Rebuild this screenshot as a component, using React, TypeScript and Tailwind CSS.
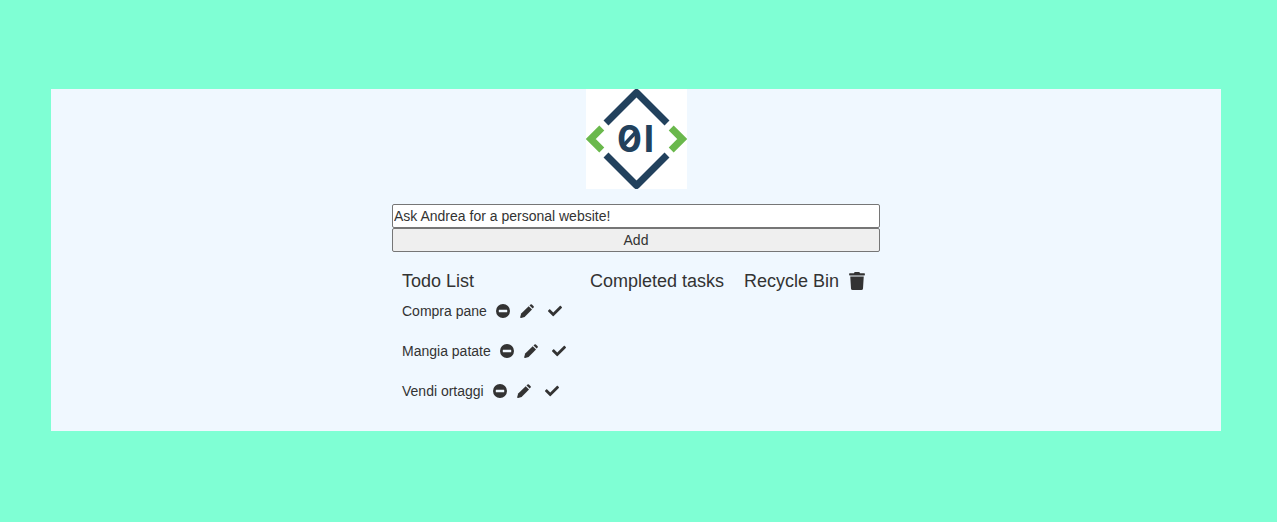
import { useState } from "react";
import { FaCheck, FaTrash } from "react-icons/fa";

const initialTasks = ["Compra pane", "Mangia patate", "Vendi ortaggi"];

function Logo() {
  return (
    <svg width="101" height="100" viewBox="0 0 101 100" role="img" aria-label="Logo" className="block bg-white">
      <g fill="none" stroke="#22415d" strokeWidth="7" strokeLinejoin="round">
        <path d="M20 34 L50.5 3.5 L81 34" />
        <path d="M20 66 L50.5 96.5 L81 66" />
      </g>
      <g fill="none" stroke="#6ab84c" strokeWidth="7">
        <path d="M15.8 39 L4.8 50 L15.8 61" />
        <path d="M85.2 39 L96.2 50 L85.2 61" />
      </g>
      <g fill="#22415d" fontFamily="Inter, sans-serif" fontWeight="700" fontSize="37">
        <text x="43.5" y="63" textAnchor="middle">0</text>
        <text x="63" y="63" textAnchor="middle">I</text>
      </g>
      <path d="M37 57 L50 43" stroke="#22415d" strokeWidth="3.5" />
    </svg>
  );
}

function MinusIcon() {
  return (
    <svg viewBox="0 0 14 14" className="size-3.5" fill="currentColor" aria-hidden="true">
      <path
        fillRule="evenodd"
        d="M7 0a7 7 0 1 0 0 14a7 7 0 0 0 0-14zM3.2 5.7h7.6q.4 0 .4.4v1.8q0 .4-.4.4H3.2q-.4 0-.4-.4V6.1q0-.4.4-.4z"
      />
    </svg>
  );
}

function PencilIcon() {
  return (
    <svg viewBox="0 0 14 14" className="size-3.5" fill="currentColor" aria-hidden="true">
      <path d="M8.7 2.2 12 5.5 4.6 12.9 1.1 13.9Q0 14.1.2 12.9L1.2 9.6z" />
      <path d="M9.5 1.4 10.5.5Q11.2-.1 11.9.5L13.6 2.2Q14.2 2.9 13.6 3.6L12.7 4.6z" />
    </svg>
  );
}

function Task({ name, onRemove }: { name: string; onRemove: () => void }) {
  return (
    <li className="flex h-5 items-center">
      <span className="mr-[9px]">{name}</span>
      <button type="button" aria-label={`Remove ${name}`} onClick={onRemove} className="mr-2.5">
        <MinusIcon />
      </button>
      <button type="button" aria-label={`Edit ${name}`} className="mr-3.5">
        <PencilIcon />
      </button>
      <button type="button" aria-label={`Complete ${name}`}>
        <FaCheck className="size-3.5" />
      </button>
    </li>
  );
}

export default function App() {
  const [tasks, setTasks] = useState(initialTasks);
  const [draft, setDraft] = useState("Ask Andrea for a personal website!");

  return (
    <div className="min-h-screen bg-[#7fffd4] pt-[89px] pr-[5px] pb-[91px] font-['Liberation_Sans',Arial,sans-serif] text-sm text-[#333]">
      <main className="mx-auto flex max-w-[1170px] flex-col items-center bg-[#f0f8ff] pb-[30px]">
        <Logo />
        <div className="mt-[15px] w-full max-w-[488px]">
          <form
            className="flex flex-col"
            onSubmit={(e) => {
              e.preventDefault();
              if (draft.trim()) setTasks([...tasks, draft]);
            }}
          >
            <input
              aria-label="New task"
              value={draft}
              onChange={(e) => setDraft(e.target.value)}
              className="h-6 rounded-xs border border-[#767676] bg-white px-px"
            />
            <button type="submit" className="h-6 rounded-xs border border-[#767676] bg-[#efefef]">
              Add
            </button>
          </form>
          <div className="mt-[19px] flex">
            <section className="w-[188px] px-2.5">
              <h2 className="text-lg leading-5">Todo List</h2>
              <ul className="mt-2.5 flex flex-col gap-5">
                {tasks.map((task, i) => (
                  <Task key={i} name={task} onRemove={() => setTasks(tasks.filter((_, j) => j !== i))} />
                ))}
              </ul>
            </section>
            <section className="px-2.5">
              <h2 className="text-lg leading-5">Completed tasks</h2>
            </section>
            <section className="px-2.5">
              <h2 className="flex items-center gap-2.5 text-lg leading-5">
                Recycle Bin
                <FaTrash className="h-[18px] w-4" />
              </h2>
            </section>
          </div>
        </div>
      </main>
    </div>
  );
}
